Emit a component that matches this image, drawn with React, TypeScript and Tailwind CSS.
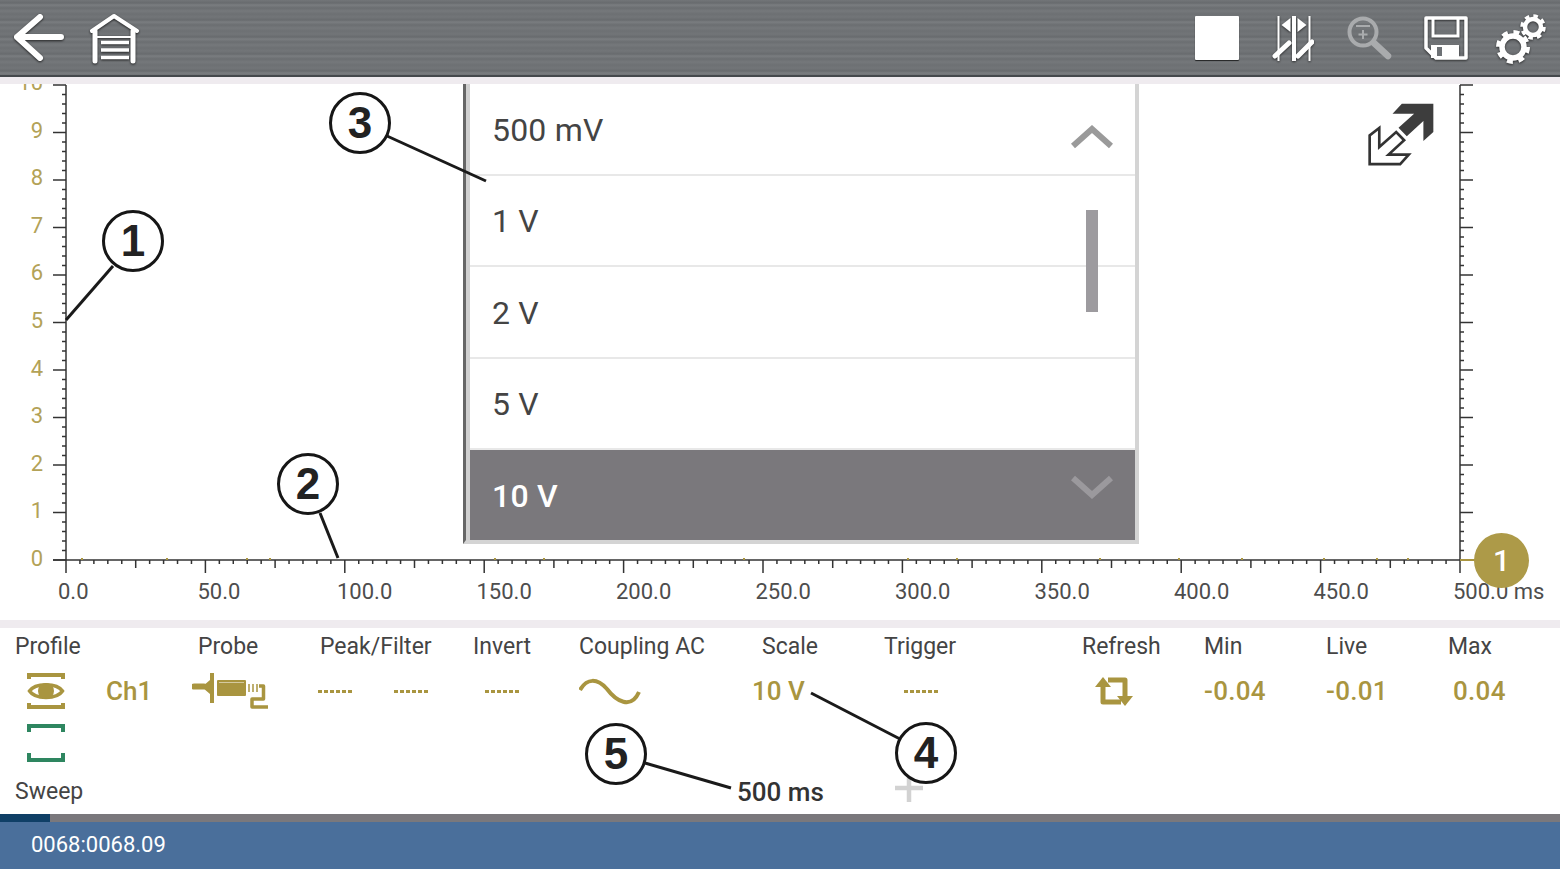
const gold = "#a99540";

const yTicks = Array.from({ length: 51 }, (_, i) => i);
const xTicks = Array.from({ length: 101 }, (_, i) => i);
const xLabels = ["0.0", "50.0", "100.0", "150.0", "200.0", "250.0", "300.0", "350.0", "400.0", "450.0", "500.0 ms"];
const traceDots = [81, 166, 246, 269, 494, 543, 743, 907, 956, 1099, 1178, 1241, 1323, 1376, 1407];
const scaleRows = ["500 mV", "1 V", "2 V", "5 V"];

function Chart() {
  return (
    <svg viewBox="0 84 1560 536" className="absolute inset-0 w-full h-full">
      <g stroke="#333" strokeWidth="1.5">
        <line x1="66" y1="85" x2="66" y2="560" />
        <line x1="1460" y1="85" x2="1460" y2="560" />
        <line x1="53" y1="560" x2="1460" y2="560" />
        {yTicks.map((i) => {
          const y = 560 - i * 9.5;
          const major = i % 5 === 0;
          return (
            <g key={i}>
              <line x1={major ? 53 : 62} y1={y} x2="66" y2={y} />
              <line x1="1460" y1={y} x2={major ? 1473 : 1464} y2={y} />
            </g>
          );
        })}
        {xTicks.map((i) => {
          const x = 66 + i * 13.94;
          const h = i % 10 === 0 ? 13 : i % 5 === 0 ? 8 : 4;
          return <line key={i} x1={x} y1="560" x2={x} y2={560 + h} />;
        })}
      </g>
      <g fill="#b3a257" fontSize="22" textAnchor="end">
        {yTicks
          .filter((i) => i % 5 === 0)
          .map((i) => (
            <text key={i} x="43" y={566 - (i / 5) * 47.6}>
              {i / 5}
            </text>
          ))}
      </g>
      <g fill="#4d4d4d" fontSize="22">
        {xLabels.map((label, i) => (
          <text key={label} x={58 + i * 139.5} y="598.500">
            {label}
          </text>
        ))}
      </g>
      {traceDots.map((x) => (
        <rect key={x} x={x} y="558" width="2" height="2" fill={gold} />
      ))}
      <line x1="1460" y1="560" x2="1480" y2="560" stroke={gold} strokeWidth="2" />
    </svg>
  );
}

function ExpandIcon() {
  return (
    <svg viewBox="560 305 205 192" className="absolute left-[1367px] top-[18px] w-[68px] h-[64px]">
      <polygon points="637,340 665,310 760,310 760,395 730,422 730,362 680,408 655,382 702,340" fill="#3d3d3d" />
      <polygon
        points="568,492 568,405 597,383 597,440 648,395 672,420 625,463 686,463 660,492"
        fill="white"
        stroke="#333"
        strokeWidth="8"
      />
    </svg>
  );
}

function Chevron({ up, color }: { up?: boolean; color: string }) {
  return (
    <svg viewBox="0 0 44 24" className="w-11 h-6">
      <polyline points={up ? "3,21 22,4 41,21" : "3,3 22,20 41,3"} fill="none" stroke={color} strokeWidth="6" />
    </svg>
  );
}

function ScaleDropdown() {
  return (
    <div className="absolute left-[463px] top-0 w-[676px] h-[460px] flex flex-col bg-white border-l-[3px] border-l-[#666] border-r-4 border-r-[#d4d4d4] border-b-4 border-b-[#d4d4d4]">
      <div className="flex-1 flex flex-col border-l-4 border-l-[#d0d0d0] text-[32px] text-[#444] tracking-[0.2px]">
        {scaleRows.map((row, i) => (
          <div key={row} className="h-[91.5px] flex items-center justify-between pl-[22px] pr-[21px] border-b-2 border-b-[#e8e8e8]">
            <span className="pt-[2px]">{row}</span>
            {i === 0 && (
              <span className="pt-4">
                <Chevron up color="#9a9a9a" />
              </span>
            )}
          </div>
        ))}
        <div className="flex-1 flex items-center justify-between pl-[22px] pr-[21px] bg-[#7a787c] text-white font-medium">
          <span className="pt-[2px]">10 V</span>
          <span className="pb-4">
            <Chevron color="#9b999d" />
          </span>
        </div>
      </div>
      <div className="absolute left-[620px] top-[126px] w-3 h-[102px] bg-[#9d9b9f]" />
    </div>
  );
}

function BackIcon() {
  return (
    <svg viewBox="0 0 54 54" className="w-[54px] h-[54px] drop-shadow-[0_1px_1px_rgba(0,0,0,0.7)]">
      <path d="M49 26H5M28 6L5 26L28 47" fill="none" stroke="white" strokeWidth="6" strokeLinecap="round" strokeLinejoin="round" />
    </svg>
  );
}

function HomeIcon() {
  return (
    <svg viewBox="0 0 54 54" className="w-[54px] h-[54px] ml-[22px] drop-shadow-[0_1px_1px_rgba(0,0,0,0.7)]">
      <path d="M4 20L26 5L49 20" fill="none" stroke="white" strokeWidth="4" strokeLinecap="round" strokeLinejoin="round" />
      <path d="M7 20V50M45 20V50" fill="none" stroke="white" strokeWidth="5" strokeLinecap="round" />
      <path d="M9 26H43" stroke="white" strokeWidth="2" />
      <path d="M13 31.500H41M13 39H41M13 46.500H41" stroke="white" strokeWidth="3.500" />
    </svg>
  );
}

function CursorsIcon() {
  return (
    <svg viewBox="0 0 42 46" className="w-[42px] h-[46px] ml-[33px] drop-shadow-[0_1px_1px_rgba(0,0,0,0.6)]">
      <path d="M6.500 1V46M37.500 1V46" stroke="white" strokeWidth="2" />
      <path d="M22 1V46" stroke="white" strokeWidth="4" />
      <polygon points="9.500,10 18.500,3 18.500,17" fill="white" />
      <polygon points="34.500,10 25.500,3 25.500,17" fill="white" />
      <path d="M3 41L17 28M26 41L40 27" stroke="white" strokeWidth="5" strokeLinecap="round" />
    </svg>
  );
}

function ZoomIcon() {
  return (
    <svg viewBox="0 0 48 48" className="w-12 h-12 ml-[31px]">
      <circle cx="18" cy="18" r="13.500" fill="none" stroke="#a9abad" strokeWidth="4" />
      <path d="M29 29L43 42" stroke="#a9abad" strokeWidth="6.500" strokeLinecap="round" />
      <path d="M11 12H25M18 16V25M13.500 20.500H22.500" stroke="#a9abad" strokeWidth="2" />
    </svg>
  );
}

function SaveIcon() {
  return (
    <svg viewBox="0 0 46 46" className="w-[46px] h-[46px] ml-[30px] drop-shadow-[0_1px_1px_rgba(0,0,0,0.6)]">
      <path d="M3 3H43V43H13L3 33Z" fill="none" stroke="white" strokeWidth="3.500" strokeLinejoin="round" />
      <path d="M10 3V21H35V3" fill="none" stroke="white" strokeWidth="3" />
      <path d="M8 30H36V43H8Z" fill="white" />
      <rect x="14" y="32" width="5" height="9" fill="#6d7175" />
    </svg>
  );
}

function GearsIcon() {
  return (
    <svg viewBox="0 0 54 54" className="w-[54px] h-[54px] ml-[26px] drop-shadow-[0_1px_1px_rgba(0,0,0,0.6)]">
      <g fill="none" stroke="white">
        <circle cx="18" cy="36" r="11" strokeWidth="5.500" />
        <circle cx="18" cy="36" r="15" strokeWidth="4" strokeDasharray="6 5.780" />
        <circle cx="38" cy="16" r="8" strokeWidth="4.500" />
        <circle cx="38" cy="16" r="11" strokeWidth="3.500" strokeDasharray="4.500 4.140" />
      </g>
    </svg>
  );
}

function EyeIcon() {
  return (
    <svg viewBox="0 0 38 36" className="w-[38px] h-9 ml-3">
      <path d="M2 6V2H36V6M2 30V34H36V30" fill="none" stroke={gold} strokeWidth="4" />
      <path d="M2.500 18C8 9.500 30 9.500 35.500 18C30 26.500 8 26.500 2.500 18Z" fill="none" stroke={gold} strokeWidth="3.500" />
      <circle cx="19" cy="18" r="8" fill={gold} />
    </svg>
  );
}

function ProbeIcon() {
  return (
    <svg viewBox="0 0 76 36" className="w-[76px] h-9 -ml-1.5">
      <path d="M2 13.500H12" stroke={gold} strokeWidth="6" strokeLinecap="round" />
      <polygon points="11,13 18,7 18,0 22,0 22,30 18,30 18,21 11,15" fill={gold} />
      <rect x="25" y="7" width="29" height="16" rx="1" fill={gold} />
      <path d="M27 9.500H52" stroke="white" strokeWidth="1" opacity="0.5" />
      <path d="M57 11V19M61 11V19M65 11V19" stroke={gold} strokeWidth="1.500" />
      <path d="M67 13H71.500V26H60V34H76" fill="none" stroke={gold} strokeWidth="3.500" strokeLinejoin="round" />
    </svg>
  );
}

function SineIcon() {
  return (
    <svg viewBox="0 0 62 28" className="w-[62px] h-7">
      <path d="M1 13C8 1 18 1 28 12C37 24 52 33 60 15" fill="none" stroke={gold} strokeWidth="4" />
    </svg>
  );
}

function RefreshIcon() {
  return (
    <svg viewBox="0 0 38 30" className="w-[38px] h-[30px] ml-[13px]">
      <path d="M8 11V26H26M13 4H30V20" fill="none" stroke={gold} strokeWidth="5" strokeLinejoin="round" />
      <polygon points="0,11 8,1 16,11" fill={gold} />
      <polygon points="22,20 38,20 30,30" fill={gold} />
    </svg>
  );
}

function Dashes() {
  return <div className="w-9 h-[3px] bg-[repeating-linear-gradient(90deg,#a99540_0_4px,transparent_4px_6px)]" />;
}

function SweepBracket() {
  return (
    <svg viewBox="0 0 38 38" className="w-[38px] h-[38px]">
      <path d="M2 8V2H36V8M2 29V36H36V29" fill="none" stroke="#2e8660" strokeWidth="4" />
    </svg>
  );
}

function Callout({ n, className }: { n: number; className: string }) {
  return (
    <div
      className={
        "absolute w-[62px] h-[62px] rounded-full bg-white border-[3px] border-[#161616] flex items-center justify-center font-['Liberation_Sans',sans-serif] font-bold text-[44px] text-[#222] " +
        className
      }
    >
      {n}
    </div>
  );
}

function App() {
  return (
    <div className="relative w-[1560px] h-[869px] overflow-hidden flex flex-col bg-white font-['Roboto',sans-serif]">
      <header className="h-[77px] flex items-center justify-between pl-3 pr-[11px] border-b-2 border-b-[#44484c] bg-[repeating-linear-gradient(180deg,#727578_0px,#686b6e_3px,#7a7d80_5px,#6b6e71_8px,#75787b_11px,#6d7073_14px,#727578_17px)]">
        <div className="flex items-center">
          <BackIcon />
          <HomeIcon />
        </div>
        <div className="flex items-center">
          <div className="w-11 h-11 bg-white rounded-[1px] shadow-[0_1px_1px_rgba(0,0,0,0.7)]" />
          <CursorsIcon />
          <ZoomIcon />
          <SaveIcon />
          <GearsIcon />
        </div>
      </header>
      <div className="h-[7px] bg-[#efebef]" />

      <div className="relative h-[536px] overflow-hidden">
        <Chart />
        <ExpandIcon />
        <ScaleDropdown />
        <div className="absolute left-[1474px] top-[449px] w-[55px] h-[55px] rounded-full bg-[#ad9a48] flex items-center justify-center text-white text-[30px] font-medium">
          1
        </div>
      </div>
      <div className="h-2 bg-[#efebef]" />

      <section className="h-[186px] flex flex-col pl-[15px] text-[23px] text-[#444]">
        <div className="h-[34px] pt-0.5 grid grid-cols-[183px_122px_153px_106px_183px_122px_198px_122px_122px_122px_1fr] items-center">
          <span>Profile</span>
          <span>Probe</span>
          <span>Peak/Filter</span>
          <span>Invert</span>
          <span>Coupling AC</span>
          <span>Scale</span>
          <span>Trigger</span>
          <span>Refresh</span>
          <span>Min</span>
          <span>Live</span>
          <span>Max</span>
        </div>
        <div className="h-[58px] pt-[3px] grid grid-cols-[183px_122px_153px_106px_183px_122px_198px_122px_122px_122px_1fr] items-center text-[26px] font-medium text-[#a99540]">
          <div className="flex items-center gap-[41px]">
            <EyeIcon />
            <span>Ch1</span>
          </div>
          <ProbeIcon />
          <div className="flex items-center gap-10 -ml-0.5">
            <Dashes />
            <Dashes />
          </div>
          <div className="ml-3">
            <Dashes />
          </div>
          <SineIcon />
          <span className="-ml-2.5">10 V</span>
          <div className="ml-5">
            <Dashes />
          </div>
          <RefreshIcon />
          <span className="tracking-[0.3px]">-0.04</span>
          <span className="tracking-[0.3px]">-0.01</span>
          <span className="ml-[5px] tracking-[0.3px]">0.04</span>
        </div>
        <div className="h-[46px] pl-3 pt-1.5">
          <SweepBracket />
        </div>
        <div className="flex-1 flex items-start">
          <span className="w-[722px] pt-2 leading-[44px]">Sweep</span>
          <span className="w-[158px] pt-2 text-[26px] leading-[44px] font-medium text-[#333]">500 ms</span>
          <svg viewBox="0 0 28 28" className="w-7 h-7 mt-3">
            <path d="M0 14H28M14 0V28" stroke="#d2d2d2" strokeWidth="4.500" />
          </svg>
        </div>
      </section>

      <div className="h-2 bg-[#7a787c]">
        <div className="w-[50px] h-full bg-[#0f3f66]" />
      </div>
      <footer className="flex-1 flex items-center pl-[31px] pb-[2px] bg-[#4a6f9b] text-[22px] text-white">0068:0068.09</footer>

      <svg viewBox="0 0 1560 869" className="absolute inset-0 w-[1560px] h-[869px] pointer-events-none">
        <g stroke="#1a1a1a" strokeWidth="3" fill="none">
          <line x1="113" y1="266" x2="66" y2="320" />
          <line x1="320" y1="513" x2="338" y2="558" />
          <line x1="387" y1="136" x2="486" y2="181" />
          <line x1="811" y1="693" x2="900" y2="739" />
          <line x1="645" y1="763" x2="731" y2="788" />
        </g>
      </svg>
      <Callout n={1} className="left-[102px] top-[210px]" />
      <Callout n={2} className="left-[277px] top-[453px]" />
      <Callout n={3} className="left-[329px] top-[92px]" />
      <Callout n={4} className="left-[895px] top-[722px]" />
      <Callout n={5} className="left-[585px] top-[723px]" />
    </div>
  );
}

export default App;
